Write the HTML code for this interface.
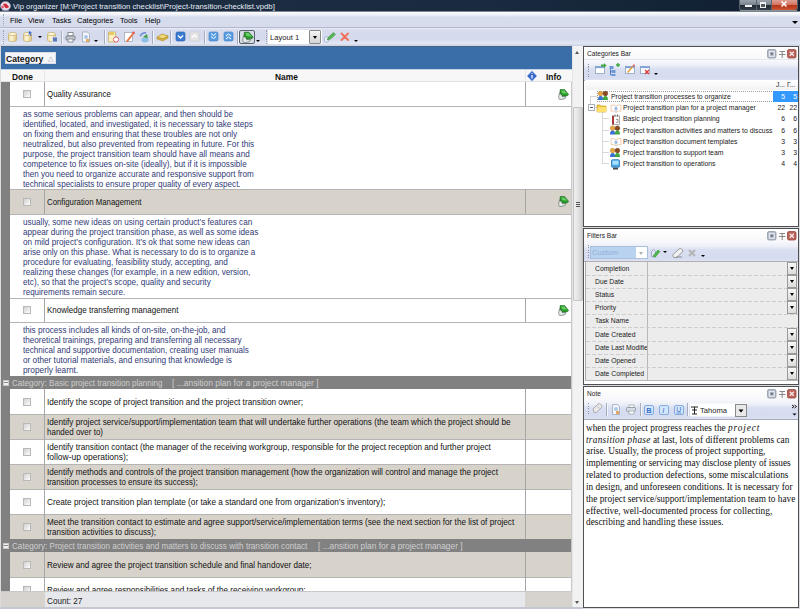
<!DOCTYPE html><html><head><meta charset="utf-8"><style>
*{margin:0;padding:0;box-sizing:border-box}
html,body{width:800px;height:609px;overflow:hidden;background:#f0f0f0;font-family:"Liberation Sans",sans-serif;font-size:8px;color:#000}
div,span{position:absolute;white-space:nowrap}
.t{font-size:8px;line-height:10px}
.cb{width:8px;height:8px;border:1px solid #b8b8b8;background:linear-gradient(135deg,#d0d0d0,#f0f0f0 70%,#fff)}
.vl{width:1px;background:#a6a6a6}
.hl{height:1px;background:#b4b4b4}
.desc{left:23px;color:#313a76;font-size:8.6px;line-height:9.96px;transform:scaleX(0.935);transform-origin:0 0}
.nm{left:47px;color:#111;font-size:8.6px;line-height:9.9px;transform:scaleX(0.95);transform-origin:0 0}
.grp{left:1px;width:571px;height:13px;background:#818181;color:#dadada;font-size:8px;line-height:13px}
.sep{width:1px;height:13px;background:#a8b0c4;border-right:1px solid #fff}
.ptitle{font-size:6.6px;color:#222}
.pbtn{width:9px;height:9px;border-radius:2px}
</style></head><body>
<div style="left:0;top:0;width:800px;height:11px;background:linear-gradient(90deg,#1e2f44,#1a2b40 60%,#0f1f30)"></div>
<div style="left:0;top:11px;width:800px;height:1px;background:#7a858f"></div>
<svg style="position:absolute;left:0px;top:0px" width="12" height="12" viewBox="0 0 12 12"><ellipse cx="5.5" cy="6" rx="5" ry="4.5" fill="#e8dce8" stroke="#a8a0b8" stroke-width=".6"/><path d="M3 4.5q2-2 4 0t2 2.5q-2 2-4 .5z" fill="#d02838"/><circle cx="2.6" cy="7" r="1.2" fill="#e05060"/><path d="M2 10q3.5 1.5 7 0" stroke="#8890b8" stroke-width="1" fill="none"/></svg>
<div style="left:13px;top:1.5px;font-size:7.7px;line-height:10px;color:#e4ecf4">Vip organizer [M:\Project transition checklist\Project-transition-checklist.vpdb]</div>
<div style="left:739px;top:0;width:59px;height:11px;border:1px solid #58606a;border-top:0;border-radius:0 0 3px 3px;background:linear-gradient(#9aa2ac,#7c858f 45%,#202a34 55%,#34404a)"></div>
<div style="left:756px;top:0;width:1px;height:10px;background:#5a626c"></div>
<div style="left:771px;top:0;width:1px;height:10px;background:#5a626c"></div>
<div style="left:772px;top:0;width:25px;height:10px;background:linear-gradient(#e0a092,#d27866 45%,#b83418 55%,#c85838);border-radius:0 0 3px 0"></div>
<div style="left:745px;top:5px;width:7px;height:2px;background:#f4f4f4"></div>
<div style="left:760px;top:2px;width:6px;height:6px;border:1px solid #f0f0f0;border-top-width:2px;background:#505860"></div>
<svg style="position:absolute;left:780px;top:0px" width="9" height="9" viewBox="0 0 9 9"><path d="M1.5 1.5l5 5M6.5 1.5l-5 5" stroke="#fff" stroke-width="1.6"/></svg>
<div style="left:740px;top:10px;width:57px;height:1px;background:#8a929a"></div>
<div style="left:0;top:12px;width:800px;height:15px;background:linear-gradient(#fdfdfe,#eceff8 3px,#d8ddee 5px,#d6dcec)"></div>
<div style="left:0;top:27px;width:800px;height:1px;background:#b4b8cc"></div>
<div style="left:10px;top:15.5px;font-size:7.5px;line-height:10px;color:#000">File</div>
<div style="left:28px;top:15.5px;font-size:7.5px;line-height:10px;color:#000">View</div>
<div style="left:52px;top:15.5px;font-size:7.5px;line-height:10px;color:#000">Tasks</div>
<div style="left:77px;top:15.5px;font-size:7.5px;line-height:10px;color:#000">Categories</div>
<div style="left:120px;top:15.5px;font-size:7.5px;line-height:10px;color:#000">Tools</div>
<div style="left:145px;top:15.5px;font-size:7.5px;line-height:10px;color:#000">Help</div>
<div style="left:3px;top:14px;width:1px;height:12px;border-left:1px dotted #9aa"></div>
<div style="left:792px;top:21px;width:0;height:0;border-left:3px solid transparent;border-right:3px solid transparent;border-top:3px solid #000"></div>
<div style="left:0;top:28px;width:800px;height:18px;background:linear-gradient(#eceef8,#d6dcee 2px,#d4daec 60%,#e2e6f4 85%,#c8d0e0)"></div>
<div style="left:3px;top:30px;width:1px;height:14px;border-left:1px dotted #9aa"></div>
<svg style="position:absolute;left:0px;top:28px" width="400" height="18" viewBox="0 0 400 18"><defs><linearGradient id="gy" x1="0" x2="1"><stop offset="0" stop-color="#eadc9c"/><stop offset=".4" stop-color="#fdf6d8"/><stop offset="1" stop-color="#d8c078"/></linearGradient></defs><path d="M8.5 6v6a4 1.6 0 0 0 8 0v-6" fill="url(#gy)" stroke="#c8b070" stroke-width=".8"/><ellipse cx="12.5" cy="6" rx="4" ry="1.6" fill="#fff8dc" stroke="#c8b070" stroke-width=".8"/><path d="M23.5 6v6a4 1.6 0 0 0 8 0v-6" fill="url(#gy)" stroke="#c8b070" stroke-width=".8"/><ellipse cx="27.5" cy="6" rx="4" ry="1.6" fill="#fff8dc" stroke="#c8b070" stroke-width=".8"/><path d="M29 3l3 1.5-1.5 0.8 1 2-1 .6-1-2-1 1z" fill="#3a6ad0"/><path d="M47.5 6v6a4 1.6 0 0 0 8 0v-6" fill="url(#gy)" stroke="#c8b070" stroke-width=".8"/><ellipse cx="51.5" cy="6" rx="4" ry="1.6" fill="#fff8dc" stroke="#c8b070" stroke-width=".8"/><rect x="52.5" y="9" width="5" height="5" fill="#5a78b8" stroke="#e8ecf4" stroke-width=".8"/><rect x="68" y="4.5" width="5" height="3.5" fill="#fff" stroke="#80868e" stroke-width=".9"/><rect x="66" y="8" width="9" height="4" rx="1" fill="#c8ccd4" stroke="#70767e" stroke-width=".9"/><rect x="68" y="11" width="5" height="3" fill="#fff" stroke="#80868e" stroke-width=".9"/><path d="M82.5 4h5l2 2v8h-7z" fill="#f4f6fa" stroke="#9aa6b8" stroke-width=".8"/><circle cx="86" cy="9" r="2" fill="#a8c8e8"/><rect x="86" y="11" width="3" height="3" fill="#e8a860"/><path d="M108.5 4h7v10h-7z" fill="#fbf0c0" stroke="#c8b070" stroke-width=".8"/><rect x="109" y="4" width="5" height="3" fill="#e8c860"/><circle cx="116" cy="11.5" r="2.6" fill="#fff" stroke="#e06070" stroke-width="1"/><rect x="124.5" y="4.5" width="8" height="9" fill="#fff" stroke="#a0a8b8" stroke-width=".8"/><path d="M126 13l6-7.5 1.5 1.2-6 7.5z" fill="#e8784a"/><circle cx="133.5" cy="5" r="1.4" fill="#e06050"/><path d="M140 8q3-4 6-3" stroke="#6a8ad8" stroke-width="1.4" fill="none"/><path d="M143 9l4-3 1 5z" fill="#40a040"/><ellipse cx="145" cy="12" rx="3.5" ry="2.5" fill="#8ac0e8"/><path d="M157 9l5-3 6 2-5 3z" fill="#f0d878" stroke="#b89838" stroke-width=".8"/><path d="M157 9v2l6 2 5-3v-2l-5 3z" fill="#d8b040" stroke="#b89838" stroke-width=".6"/><rect x="176" y="4" width="9" height="9" rx="1.5" fill="#3a7ad0" stroke="#2a5aa8" stroke-width=".6"/><path d="M178 7.5l2.5 2.5 2.5-2.5" stroke="#fff" stroke-width="1.3" fill="none"/><rect x="190" y="4" width="9" height="9" rx="1.5" fill="#e4e4e4" stroke="#c8c8c8" stroke-width=".6"/><path d="M192 9.5l2.5-2.5 2.5 2.5" stroke="#fff" stroke-width="1.3" fill="none"/><rect x="209" y="4" width="9" height="9" rx="1.5" fill="#5a9ee0" stroke="#3a78c0" stroke-width=".6"/><path d="M211 5.5l2.5 2 2.5-2M211 8.5l2.5 2 2.5-2" stroke="#fff" stroke-width="1" fill="none"/><rect x="224" y="4" width="9" height="9" rx="1.5" fill="#5a9ee0" stroke="#3a78c0" stroke-width=".6"/><path d="M226 8l2.5-2 2.5 2M226 11l2.5-2 2.5 2" stroke="#fff" stroke-width="1" fill="none"/><rect x="239.5" y="2.5" width="15" height="13" rx="1.5" fill="#d6dbe4" stroke="#5a6470" stroke-width="1"/><g transform="translate(242,3.6) scale(1.05)"><path d="M.6 8.5L1.5 3.8 3.6 3.4 4.6 7.6H8L7 9.6 3 10.5H1.6z" fill="#e2e8ec" stroke="#6a786a" stroke-width=".7"/><path d="M2.2 .6H6.6L10.6 5.4 9.6 6.6 8 6.9 4.2 7.1 3.4 4.6 2 5.2z" fill="#28a028" stroke="#1a601a" stroke-width=".6"/><path d="M3.3 1.4h3l2.8 3.2-4.8-.4z" fill="#6acc6a"/></g><rect x="324.5" y="9" width="4" height="5" rx="1" fill="#f0f4fa" stroke="#98a4c8" stroke-width=".7"/><path d="M327 12l1.5-3 5-4.5 2 2-5 4.5z" fill="#58b858" stroke="#308030" stroke-width=".5"/><path d="M341.5 5.5l6.5 6.5M348 5.5l-6.5 6.5" stroke="#f0705a" stroke-width="1.9" stroke-linecap="round"/></svg>
<div style="left:38px;top:36px;width:0;height:0;border-left:2px solid transparent;border-right:2px solid transparent;border-top:2px solid #000"></div>
<div style="left:61px;top:31px;width:1px;height:13px;background:#a4acc0;box-shadow:1px 0 0 #f4f6fb"></div>
<div style="left:94px;top:40px;width:0;height:0;border-left:2px solid transparent;border-right:2px solid transparent;border-top:2px solid #000"></div>
<div style="left:104px;top:30px;width:1px;height:14px;background:#a4acc0;box-shadow:1px 0 0 #f4f6fb"></div>
<div style="left:152px;top:31px;width:1px;height:13px;background:#a4acc0;box-shadow:1px 0 0 #f4f6fb"></div>
<div style="left:170px;top:31px;width:1px;height:13px;background:#a4acc0;box-shadow:1px 0 0 #f4f6fb"></div>
<div style="left:204px;top:31px;width:1px;height:13px;background:#a4acc0;box-shadow:1px 0 0 #f4f6fb"></div>
<div style="left:237px;top:31px;width:1px;height:13px;background:#a4acc0;box-shadow:1px 0 0 #f4f6fb"></div>
<div style="left:256px;top:40px;width:0;height:0;border-left:2px solid transparent;border-right:2px solid transparent;border-top:2px solid #000"></div>
<div style="left:266px;top:30px;width:1px;height:14px;border-left:1px dotted #98a0b0"></div>
<div style="left:268px;top:30px;width:54px;height:14px;background:#fff"></div>
<div style="left:270px;top:32.5px;font-size:7.6px;line-height:10px;color:#222">Layout 1</div>
<div style="left:309px;top:30px;width:12px;height:14px;background:linear-gradient(#f4f4f4,#d4d4d4);border:1px solid #8a8a8a;border-radius:1px"></div>
<div style="left:313px;top:36px;width:0;height:0;border-left:2.5px solid transparent;border-right:2.5px solid transparent;border-top:3px solid #000"></div>
<div style="left:354px;top:40px;width:0;height:0;border-left:2px solid transparent;border-right:2px solid transparent;border-top:2px solid #000"></div>
<div style="left:0;top:46px;width:1px;height:563px;background:#dcdcdc"></div>
<div style="left:1px;top:46px;width:571px;height:563px;background:#fff"></div>
<div style="left:1px;top:46px;width:571px;height:1px;background:#4a6284"></div><div style="left:1px;top:47px;width:571px;height:22px;background:#3a6ea8"></div>
<div style="left:5px;top:52px;width:51px;height:12px;background:#f4f6fa;border:1px solid #d8dde8"></div>
<div style="left:6px;top:54px;font-size:8.6px;line-height:10px;font-weight:bold;color:#111">Category</div>
<div style="left:48px;top:54px;font-size:7px;line-height:10px;color:#999">&#x25b3;</div>
<div style="left:1px;top:69px;width:571px;height:13px;background:#f7f7f7"></div>
<div style="left:1px;top:69px;width:571px;height:1px;background:#c4d4e6"></div>
<div style="left:1px;top:81px;width:571px;height:1px;background:#e2e2e2"></div>
<div style="left:12px;top:72px;font-size:8.4px;line-height:10px;font-weight:bold;color:#111">Done</div>
<div style="left:44px;top:70px;width:1px;height:11px;background:#e6e6e6"></div>
<div style="left:275px;top:72px;font-size:8.4px;line-height:10px;font-weight:bold;color:#111">Name</div>
<div style="left:525px;top:70px;width:1px;height:11px;background:#e6e6e6"></div>
<svg style="position:absolute;left:526px;top:70px" width="12" height="12" viewBox="0 0 12 12"><path d="M6 .8L11 6 6 11.2 1 6z" fill="#3a68c8" stroke="#a8bce8" stroke-width=".9"/><path d="M6 3.2v.8M6 5v3.5" stroke="#fff" stroke-width="1.2"/></svg>
<div style="left:546px;top:72px;font-size:8.4px;line-height:10px;font-weight:bold;color:#111">Info</div>
<div style="left:10px;top:82px;width:562px;height:24px;background:#fff"></div>
<div style="left:1px;top:82px;width:9px;height:24px;background:#808080"></div>
<div class="vl" style="left:44px;top:82px;height:24px"></div>
<div class="vl" style="left:525px;top:82px;height:24px"></div>
<div class="cb" style="left:23px;top:90px"></div>
<div class="nm" style="top:90.20px;transform:scaleX(0.9208)">Quality Assurance</div>
<svg style="position:absolute;left:558px;top:88.5px" width="11" height="11" viewBox="0 0 11 11"><path d="M.6 8.5L1.5 3.8 3.6 3.4 4.6 7.6H8L7 9.6 3 10.5H1.6z" fill="#e2e8ec" stroke="#6a786a" stroke-width=".7"/><path d="M2.2 .6H6.6L10.6 5.4 9.6 6.6 8 6.9 4.2 7.1 3.4 4.6 2 5.2z" fill="#28a028" stroke="#1a601a" stroke-width=".6"/><path d="M3.3 1.4h3l2.8 3.2-4.8-.4z" fill="#6acc6a"/></svg>
<div style="left:10px;top:106px;width:562px;height:83px;background:#fff"></div>
<div style="left:1px;top:106px;width:9px;height:83px;background:#808080"></div>
<div class="hl" style="left:10px;top:106px;width:562px"></div>
<div class="desc" style="top:110.30px;transform:scaleX(0.9413)">as some serious problems can appear, and then should be</div>
<div class="desc" style="top:120.26px;transform:scaleX(0.9391)">identified, located, and investigated, it is necessary to take steps</div>
<div class="desc" style="top:130.22px;transform:scaleX(0.9479)">on fixing them and ensuring that these troubles are not only</div>
<div class="desc" style="top:140.18px;transform:scaleX(0.9545)">neutralized, but also prevented from repeating in future. For this</div>
<div class="desc" style="top:150.14px;transform:scaleX(0.9472)">purpose, the project transition team should have all means and</div>
<div class="desc" style="top:160.10px;transform:scaleX(0.9460)">competence to fix issues on-site (ideally), but if it is impossible</div>
<div class="desc" style="top:170.06px;transform:scaleX(0.9379)">then you need to organize accurate and responsive support from</div>
<div class="desc" style="top:180.02px;transform:scaleX(0.9393)">technical specialists to ensure proper quality of every aspect.</div>
<div style="left:10px;top:189px;width:562px;height:25px;background:#d7d3cb"></div>
<div style="left:1px;top:189px;width:9px;height:25px;background:#808080"></div>
<div class="hl" style="left:10px;top:189px;width:562px"></div>
<div class="vl" style="left:44px;top:189px;height:25px"></div>
<div class="vl" style="left:525px;top:189px;height:25px"></div>
<div class="cb" style="left:23px;top:198px"></div>
<div class="nm" style="top:197.70px;transform:scaleX(0.9107)">Configuration Management</div>
<svg style="position:absolute;left:558px;top:196px" width="11" height="11" viewBox="0 0 11 11"><path d="M.6 8.5L1.5 3.8 3.6 3.4 4.6 7.6H8L7 9.6 3 10.5H1.6z" fill="#e2e8ec" stroke="#6a786a" stroke-width=".7"/><path d="M2.2 .6H6.6L10.6 5.4 9.6 6.6 8 6.9 4.2 7.1 3.4 4.6 2 5.2z" fill="#28a028" stroke="#1a601a" stroke-width=".6"/><path d="M3.3 1.4h3l2.8 3.2-4.8-.4z" fill="#6acc6a"/></svg>
<div style="left:10px;top:214px;width:562px;height:84px;background:#fff"></div>
<div style="left:1px;top:214px;width:9px;height:84px;background:#808080"></div>
<div class="hl" style="left:10px;top:214px;width:562px"></div>
<div class="desc" style="top:218.30px;transform:scaleX(0.9437)">usually, some new ideas on using certain product&#8217;s features can</div>
<div class="desc" style="top:228.26px;transform:scaleX(0.9508)">appear during the project transition phase, as well as some ideas</div>
<div class="desc" style="top:238.22px;transform:scaleX(0.9532)">on mild project&#8217;s configuration. It&#8217;s ok that some new ideas can</div>
<div class="desc" style="top:248.18px;transform:scaleX(0.9382)">arise only on this phase. What is necessary to do is to organize a</div>
<div class="desc" style="top:258.14px;transform:scaleX(0.9490)">procedure for evaluating, feasibility study, accepting, and</div>
<div class="desc" style="top:268.10px;transform:scaleX(0.9476)">realizing these changes (for example, in a new edition, version,</div>
<div class="desc" style="top:278.06px;transform:scaleX(0.9523)">etc), so that the project&#8217;s scope, quality and security</div>
<div class="desc" style="top:288.02px;transform:scaleX(0.9341)">requirements remain secure.</div>
<div style="left:10px;top:298px;width:562px;height:24px;background:#fff"></div>
<div style="left:1px;top:298px;width:9px;height:24px;background:#808080"></div>
<div class="hl" style="left:10px;top:298px;width:562px"></div>
<div class="vl" style="left:44px;top:298px;height:24px"></div>
<div class="vl" style="left:525px;top:298px;height:24px"></div>
<div class="cb" style="left:23px;top:306px"></div>
<div class="nm" style="top:306.20px;transform:scaleX(0.9330)">Knowledge transferring management</div>
<svg style="position:absolute;left:558px;top:304.5px" width="11" height="11" viewBox="0 0 11 11"><path d="M.6 8.5L1.5 3.8 3.6 3.4 4.6 7.6H8L7 9.6 3 10.5H1.6z" fill="#e2e8ec" stroke="#6a786a" stroke-width=".7"/><path d="M2.2 .6H6.6L10.6 5.4 9.6 6.6 8 6.9 4.2 7.1 3.4 4.6 2 5.2z" fill="#28a028" stroke="#1a601a" stroke-width=".6"/><path d="M3.3 1.4h3l2.8 3.2-4.8-.4z" fill="#6acc6a"/></svg>
<div style="left:10px;top:322px;width:562px;height:54px;background:#fff"></div>
<div style="left:1px;top:322px;width:9px;height:54px;background:#808080"></div>
<div class="hl" style="left:10px;top:322px;width:562px"></div>
<div class="desc" style="top:326.30px;transform:scaleX(0.9491)">this process includes all kinds of on-site, on-the-job, and</div>
<div class="desc" style="top:336.26px;transform:scaleX(0.9469)">theoretical trainings, preparing and transferring all necessary</div>
<div class="desc" style="top:346.22px;transform:scaleX(0.9381)">technical and supportive documentation, creating user manuals</div>
<div class="desc" style="top:356.18px;transform:scaleX(0.9568)">or other tutorial materials, and ensuring that knowledge is</div>
<div class="desc" style="top:366.14px;transform:scaleX(0.9617)">properly learnt.</div>
<div class="grp" style="top:376px"></div>
<div style="left:3px;top:380px;width:6px;height:6px;background:#f0f0f0;border:1px solid #c8c8c8"></div>
<div style="left:4px;top:382px;width:4px;height:1px;background:#8a8a8a"></div>
<div style="left:12px;top:378px;font-size:8.6px;line-height:10px;color:#cfcfcf;transform:scaleX(0.9346);transform-origin:0 0">Category: Basic project transition planning</div>
<div style="left:172px;top:378px;font-size:8.6px;line-height:10px;color:#cfcfcf;transform:scaleX(0.9832);transform-origin:0 0">[ ...ansition plan for a project manager ]</div>
<div style="left:10px;top:389px;width:562px;height:25px;background:#fff"></div>
<div style="left:1px;top:389px;width:9px;height:25px;background:#808080"></div>
<div class="vl" style="left:44px;top:389px;height:25px"></div>
<div class="vl" style="left:525px;top:389px;height:25px"></div>
<div class="cb" style="left:23px;top:398px"></div>
<div class="nm" style="top:397.70px;transform:scaleX(0.9590)">Identify the scope of project transition and the project transition owner;</div>
<div style="left:10px;top:414px;width:562px;height:25px;background:#d7d3cb"></div>
<div style="left:1px;top:414px;width:9px;height:25px;background:#808080"></div>
<div class="hl" style="left:10px;top:414px;width:562px"></div>
<div class="vl" style="left:44px;top:414px;height:25px"></div>
<div class="vl" style="left:525px;top:414px;height:25px"></div>
<div class="cb" style="left:23px;top:423px"></div>
<div class="nm" style="top:417.80px;transform:scaleX(0.9552)">Identify project service/support/implementation team that will undertake further operations (the team which the project should be</div>
<div class="nm" style="top:427.70px;transform:scaleX(0.9300)">handed over to)</div>
<div style="left:10px;top:439px;width:562px;height:25px;background:#fff"></div>
<div style="left:1px;top:439px;width:9px;height:25px;background:#808080"></div>
<div class="hl" style="left:10px;top:439px;width:562px"></div>
<div class="vl" style="left:44px;top:439px;height:25px"></div>
<div class="vl" style="left:525px;top:439px;height:25px"></div>
<div class="cb" style="left:23px;top:448px"></div>
<div class="nm" style="top:442.80px;transform:scaleX(0.9539)">Identify transition contact (the manager of the receiving workgroup, responsible for the project reception and further project</div>
<div class="nm" style="top:452.70px;transform:scaleX(0.9880)">follow-up operations);</div>
<div style="left:10px;top:464px;width:562px;height:25px;background:#d7d3cb"></div>
<div style="left:1px;top:464px;width:9px;height:25px;background:#808080"></div>
<div class="hl" style="left:10px;top:464px;width:562px"></div>
<div class="vl" style="left:44px;top:464px;height:25px"></div>
<div class="vl" style="left:525px;top:464px;height:25px"></div>
<div class="cb" style="left:23px;top:473px"></div>
<div class="nm" style="top:467.80px;transform:scaleX(0.9515)">Identify methods and controls of the project transition management (how the organization will control and manage the project</div>
<div class="nm" style="top:477.70px;transform:scaleX(0.9171)">transition processes to ensure its success);</div>
<div style="left:10px;top:489px;width:562px;height:25px;background:#fff"></div>
<div style="left:1px;top:489px;width:9px;height:25px;background:#808080"></div>
<div class="hl" style="left:10px;top:489px;width:562px"></div>
<div class="vl" style="left:44px;top:489px;height:25px"></div>
<div class="vl" style="left:525px;top:489px;height:25px"></div>
<div class="cb" style="left:23px;top:498px"></div>
<div class="nm" style="top:497.70px;transform:scaleX(0.9560)">Create project transition plan template (or take a standard one from organization&#8217;s inventory);</div>
<div style="left:10px;top:514px;width:562px;height:25px;background:#d7d3cb"></div>
<div style="left:1px;top:514px;width:9px;height:25px;background:#808080"></div>
<div class="hl" style="left:10px;top:514px;width:562px"></div>
<div class="vl" style="left:44px;top:514px;height:25px"></div>
<div class="vl" style="left:525px;top:514px;height:25px"></div>
<div class="cb" style="left:23px;top:523px"></div>
<div class="nm" style="top:517.80px;transform:scaleX(0.9524)">Meet the transition contact to estimate and agree support/service/implementation terms (see the next section for the list of project</div>
<div class="nm" style="top:527.70px;transform:scaleX(0.9396)">transition activities to discuss);</div>
<div class="grp" style="top:539px"></div>
<div style="left:3px;top:543px;width:6px;height:6px;background:#f0f0f0;border:1px solid #c8c8c8"></div>
<div style="left:4px;top:545px;width:4px;height:1px;background:#8a8a8a"></div>
<div style="left:12px;top:541px;font-size:8.6px;line-height:10px;color:#cfcfcf;transform:scaleX(0.9453);transform-origin:0 0">Category: Project transition activities and matters to discuss with transition contact</div>
<div style="left:318px;top:541px;font-size:8.6px;line-height:10px;color:#cfcfcf;transform:scaleX(0.9698);transform-origin:0 0">[ ...ansition plan for a project manager ]</div>
<div style="left:10px;top:552px;width:562px;height:25px;background:#d7d3cb"></div>
<div style="left:1px;top:552px;width:9px;height:25px;background:#808080"></div>
<div class="vl" style="left:44px;top:552px;height:25px"></div>
<div class="vl" style="left:525px;top:552px;height:25px"></div>
<div class="cb" style="left:23px;top:561px"></div>
<div class="nm" style="top:560.70px;transform:scaleX(0.9429)">Review and agree the project transition schedule and final handover date;</div>
<div style="left:10px;top:577px;width:562px;height:25px;background:#fff"></div>
<div style="left:1px;top:577px;width:9px;height:25px;background:#808080"></div>
<div class="hl" style="left:10px;top:577px;width:562px"></div>
<div class="vl" style="left:44px;top:577px;height:25px"></div>
<div class="vl" style="left:525px;top:577px;height:25px"></div>
<div class="cb" style="left:23px;top:586px"></div>
<div class="nm" style="top:585.70px;transform:scaleX(0.9478)">Review and agree responsibilities and tasks of the receiving workgroup;</div>
<div style="left:571px;top:82px;width:1px;height:509px;background:#c8c8c8"></div>
<div style="left:1px;top:591px;width:571px;height:16px;background:#e6e8ec;border-top:1px solid #c8c8c8"></div>
<div style="left:1px;top:592px;width:44px;height:15px;background:#d6d3ce"></div>
<div style="left:525px;top:592px;width:47px;height:15px;background:#d6d3ce"></div>
<div style="left:47px;top:595.5px;font-size:8.6px;line-height:10px;color:#222;transform:scaleX(.95);transform-origin:0 0">Count: 27</div>
<div style="left:0;top:607px;width:583px;height:2px;background:#c4c8d0"></div>
<div style="left:0;top:607px;width:800px;height:2px;background:#c4c8d0"></div>
<div style="left:572px;top:46px;width:11px;height:561px;background:#f2f2f2;border-left:1px solid #e6e6e6"></div>
<div style="left:575px;top:51px;width:0;height:0;border-left:2.5px solid transparent;border-right:2.5px solid transparent;border-bottom:3px solid #555"></div>
<div style="left:573px;top:107px;width:10px;height:194px;background:linear-gradient(90deg,#f0f0f0,#e0e0e0 60%,#cfcfcf);border:1px solid #c4c4c4;border-radius:1px"></div>
<div style="left:576px;top:202px;width:4px;height:5px;background:repeating-linear-gradient(#555 0 1px,transparent 1px 2px)"></div>
<div style="left:575px;top:601px;width:0;height:0;border-left:2.5px solid transparent;border-right:2.5px solid transparent;border-top:3px solid #555"></div>
<div style="left:583px;top:46px;width:217px;height:563px;background:#d8dbe2"></div>
<div style="left:583px;top:46px;width:216px;height:181px;border:1px solid #505050;background:#fff"></div>
<div style="left:584px;top:47px;width:214px;height:13px;background:linear-gradient(#fff,#f8f8fa);border-bottom:1px solid #e4e6ec"></div>
<div class="ptitle" style="left:587px;top:49px;line-height:10px">Categories Bar</div>
<svg style="position:absolute;left:766px;top:48px" width="32" height="12" viewBox="0 0 32 12"><rect x="1.5" y="1.5" width="8.5" height="8.5" rx="1.5" fill="#aab4c2" stroke="#909aa8" stroke-width=".8"/><rect x="3.3" y="3.3" width="5" height="5" fill="none" stroke="#eef0f4" stroke-width="1"/><rect x="5" y="5" width="1.6" height="1.6" fill="#556"/><path d="M13.5 3.5h5.5M16.2 3.5v2.5M13 6.5h6.5M16.2 6.5v3.5" stroke="#7a7a7a" stroke-width=".9" fill="none"/><rect x="21.5" y="1.5" width="8.5" height="8.5" rx="1.5" fill="#b8645a" stroke="#98483e" stroke-width=".8"/><path d="M23.8 3.8l4 4M27.8 3.8l-4 4" stroke="#f8e8e8" stroke-width="1.3"/></svg>
<div style="left:584px;top:60px;width:214px;height:21px;background:linear-gradient(#f8f9fd,#eef0f8 25%,#d9dff1 45%,#d6dcf0 85%,#dde2f2);border-bottom:1px solid #a8acb8"></div>
<div style="left:588px;top:64px;width:1px;height:13px;background:repeating-linear-gradient(#8890a0 0 1px,transparent 1px 2.5px)"></div>
<svg style="position:absolute;left:584px;top:60px" width="90" height="20" viewBox="0 0 90 20"><rect x="11.5" y="6.5" width="9" height="7" fill="#fff" stroke="#8aa0c0" stroke-width=".8"/><rect x="11.5" y="6.5" width="9" height="1.6" fill="#7aa0d8"/><path d="M17 4.5h3v-1.5l2.5 2.5-2.5 2.5v-1.5h-3z" fill="#40a840"/><rect x="25.5" y="6" width="4" height="3" fill="#6a98d8"/><rect x="27.5" y="10" width="4" height="3" fill="#6a98d8"/><rect x="27.5" y="14" width="4" height="2" fill="#6a98d8"/><path d="M26.5 9v6h1M26.5 11.5h1" stroke="#3a68b0" stroke-width=".8" fill="none"/><path d="M32 5h4M34 3v4" stroke="#40a840" stroke-width="1.4"/><rect x="41.5" y="6.5" width="9" height="7" fill="#fff" stroke="#8aa0c0" stroke-width=".8"/><rect x="41.5" y="6.5" width="9" height="1.6" fill="#7aa0d8"/><path d="M43 12l5-6 1.2 1-5 6z" fill="#e0a040"/><path d="M48.5 5.5l1.5-1.2 1 1-1.2 1.5z" fill="#e05040"/><rect x="56.5" y="6.5" width="9" height="7" fill="#fff" stroke="#8aa0c0" stroke-width=".8"/><rect x="56.5" y="6.5" width="9" height="1.6" fill="#7aa0d8"/><path d="M61 10l4 4M65 10l-4 4" stroke="#e03030" stroke-width="1.2"/></svg>
<div style="left:654px;top:73px;width:0;height:0;border-left:2px solid transparent;border-right:2px solid transparent;border-top:2px solid #000"></div>
<div style="left:585px;top:80px;width:213px;height:10px;background:linear-gradient(#fff,#f2f2f2)"></div>
<div style="left:776px;top:80px;font-size:6.6px;line-height:10px;color:#222">J...</div>
<div style="left:787px;top:80px;font-size:6.6px;line-height:10px;color:#222">&#x413;...</div>
<div style="left:597px;top:91px;width:201px;height:11px;border:1px dotted #9a9a9a"></div>
<div style="left:773px;top:91px;width:25px;height:11px;background:#3399ff"></div>
<div style="left:590px;top:96px;width:1px;height:8px;background:#d4d4d4"></div>
<div style="left:590px;top:96px;width:7px;height:1px;background:#d4d4d4"></div>
<div style="left:602px;top:112px;width:1px;height:52px;background:#d8d8d8"></div>
<div style="left:603px;top:118px;width:6px;height:1px;background:#d8d8d8"></div>
<div style="left:603px;top:130px;width:6px;height:1px;background:#d8d8d8"></div>
<div style="left:603px;top:141px;width:6px;height:1px;background:#d8d8d8"></div>
<div style="left:603px;top:152px;width:6px;height:1px;background:#d8d8d8"></div>
<div style="left:603px;top:163px;width:6px;height:1px;background:#d8d8d8"></div>
<div style="left:593px;top:107px;width:4px;height:1px;background:#d4d4d4"></div>
<div style="left:588px;top:104px;width:7px;height:7px;border:1px solid #a8b0bc;background:#fff"></div>
<div style="left:590px;top:107px;width:3px;height:1px;background:#606060"></div>
<svg style="position:absolute;left:0;top:0" width="800" height="200"><circle cx="600.6" cy="93.6" r="2.3" fill="#e8a848" stroke="#b87818" stroke-width=".5"/><path d="M598 100q0-4 2.6-4t2.6 4z" fill="#3a70d0"/><circle cx="605.4" cy="93.6" r="2.3" fill="#8a4a20" stroke="#5a2a10" stroke-width=".5"/><path d="M602.8 100q0-4 2.6-4t2.6 4z" fill="#40a840"/><path d="M597 105h3l1 1h5v6h-9z" fill="#f0c838" stroke="#c09820" stroke-width=".6"/><path d="M598 107h9l-1 5h-9z" fill="#ffe070"/><path d="M611 105.2q2.5-1 5 1q2.5-2 5-1v6q-2.5-1-5 1q-2.5-2-5-1z" fill="#fff" stroke="#e8c0a0" stroke-width=".8"/><path d="M616 106.2v6" stroke="#b8c8e0" stroke-width=".8"/><circle cx="616" cy="108.7" r="1.6" fill="#9ab8e0"/><rect x="612.5" y="115.9" width="7" height="8.5" fill="#fff" stroke="#888" stroke-width=".7"/><rect x="612" y="115.9" width="2" height="8.5" fill="#a83838"/><path d="M615 114.4v2.5M617.5 114.4v2.5" stroke="#666" stroke-width=".8"/><path d="M616 119.4h2v3h-2" stroke="#555" stroke-width=".6" fill="none"/><circle cx="612.6" cy="128.2" r="2.3" fill="#e8a848" stroke="#b87818" stroke-width=".5"/><path d="M610 134.6q0-4 2.6-4t2.6 4z" fill="#3a70d0"/><circle cx="617.4" cy="128.2" r="2.3" fill="#8a4a20" stroke="#5a2a10" stroke-width=".5"/><path d="M614.8 134.6q0-4 2.6-4t2.6 4z" fill="#40a840"/><path d="M611 138.8q2.5-1 5 1q2.5-2 5-1v6q-2.5-1-5 1q-2.5-2-5-1z" fill="#fff" stroke="#e8c0a0" stroke-width=".8"/><path d="M616 139.8v6" stroke="#b8c8e0" stroke-width=".8"/><circle cx="616" cy="142.3" r="1.6" fill="#9ab8e0"/><circle cx="612.6" cy="150.6" r="2.3" fill="#e8a848" stroke="#b87818" stroke-width=".5"/><path d="M610 157q0-4 2.6-4t2.6 4z" fill="#3a70d0"/><circle cx="617.4" cy="150.6" r="2.3" fill="#8a4a20" stroke="#5a2a10" stroke-width=".5"/><path d="M614.8 157q0-4 2.6-4t2.6 4z" fill="#40a840"/><rect x="611.5" y="159.7" width="8" height="7.5" rx="1" fill="#48a8e8" stroke="#2a70b0" stroke-width=".8"/><rect x="612.5" y="160.7" width="6" height="4" fill="#a8e0ff"/><rect x="613" y="167.7" width="5" height="1.8" fill="#404850"/></svg>
<div style="left:611px;top:91px;font-size:6.85px;line-height:11px;color:#1a1a1a">Project transition processes to organize</div>
<div style="left:760px;top:91px;width:25px;text-align:right;font-size:6.85px;line-height:11px;color:#fff">5</div>
<div style="left:772px;top:91px;width:25px;text-align:right;font-size:6.85px;line-height:11px;color:#fff">5</div>
<div style="left:623px;top:102.2px;font-size:6.85px;line-height:11px;color:#1a1a1a">Project transition plan for a project manager</div>
<div style="left:760px;top:102.2px;width:25px;text-align:right;font-size:6.85px;line-height:11px;color:#222">22</div>
<div style="left:772px;top:102.2px;width:25px;text-align:right;font-size:6.85px;line-height:11px;color:#222">22</div>
<div style="left:623px;top:113.4px;font-size:6.85px;line-height:11px;color:#1a1a1a">Basic project transition planning</div>
<div style="left:760px;top:113.4px;width:25px;text-align:right;font-size:6.85px;line-height:11px;color:#222">6</div>
<div style="left:772px;top:113.4px;width:25px;text-align:right;font-size:6.85px;line-height:11px;color:#222">6</div>
<div style="left:623px;top:124.6px;font-size:6.85px;line-height:11px;color:#1a1a1a">Project transition activities and matters to discuss</div>
<div style="left:760px;top:124.6px;width:25px;text-align:right;font-size:6.85px;line-height:11px;color:#222">6</div>
<div style="left:772px;top:124.6px;width:25px;text-align:right;font-size:6.85px;line-height:11px;color:#222">6</div>
<div style="left:623px;top:135.8px;font-size:6.85px;line-height:11px;color:#1a1a1a">Project transition document templates</div>
<div style="left:760px;top:135.8px;width:25px;text-align:right;font-size:6.85px;line-height:11px;color:#222">3</div>
<div style="left:772px;top:135.8px;width:25px;text-align:right;font-size:6.85px;line-height:11px;color:#222">3</div>
<div style="left:623px;top:147px;font-size:6.85px;line-height:11px;color:#1a1a1a">Project transition to support team</div>
<div style="left:760px;top:147px;width:25px;text-align:right;font-size:6.85px;line-height:11px;color:#222">3</div>
<div style="left:772px;top:147px;width:25px;text-align:right;font-size:6.85px;line-height:11px;color:#222">3</div>
<div style="left:623px;top:158.2px;font-size:6.85px;line-height:11px;color:#1a1a1a">Project transition to operations</div>
<div style="left:760px;top:158.2px;width:25px;text-align:right;font-size:6.85px;line-height:11px;color:#222">4</div>
<div style="left:772px;top:158.2px;width:25px;text-align:right;font-size:6.85px;line-height:11px;color:#222">4</div>
<div style="left:583px;top:228px;width:216px;height:157px;border:1px solid #505050;background:#fff"></div>
<div style="left:584px;top:229px;width:214px;height:13px;background:linear-gradient(#fff,#f8f8fa);border-bottom:1px solid #e4e6ec"></div>
<div class="ptitle" style="left:587px;top:231px;line-height:10px">Filters Bar</div>
<svg style="position:absolute;left:766px;top:230px" width="32" height="12" viewBox="0 0 32 12"><rect x="1.5" y="1.5" width="8.5" height="8.5" rx="1.5" fill="#aab4c2" stroke="#909aa8" stroke-width=".8"/><rect x="3.3" y="3.3" width="5" height="5" fill="none" stroke="#eef0f4" stroke-width="1"/><rect x="5" y="5" width="1.6" height="1.6" fill="#556"/><path d="M13.5 3.5h5.5M16.2 3.5v2.5M13 6.5h6.5M16.2 6.5v3.5" stroke="#7a7a7a" stroke-width=".9" fill="none"/><rect x="21.5" y="1.5" width="8.5" height="8.5" rx="1.5" fill="#b8645a" stroke="#98483e" stroke-width=".8"/><path d="M23.8 3.8l4 4M27.8 3.8l-4 4" stroke="#f8e8e8" stroke-width="1.3"/></svg>
<div style="left:584px;top:241px;width:214px;height:21px;background:linear-gradient(#f8f9fd,#eef0f8 25%,#d9dff1 45%,#d6dcf0 85%,#dde2f2);border-bottom:1px solid #a8acb8"></div>
<div style="left:588px;top:245px;width:1px;height:13px;background:repeating-linear-gradient(#8890a0 0 1px,transparent 1px 2.5px)"></div>
<div style="left:590px;top:246px;width:58px;height:13px;background:#b8d2f0;border:1px solid #a8c0e0"></div>
<div style="left:592px;top:247.5px;font-size:7.6px;line-height:10px;color:#90b0d8">Custom</div>
<div style="left:636px;top:247px;width:11px;height:11px;background:#fff"></div>
<div style="left:639px;top:252px;width:0;height:0;border-left:2.5px solid transparent;border-right:2.5px solid transparent;border-top:3px solid #b0b0b0"></div>
<svg style="position:absolute;left:645px;top:244px" width="65" height="17" viewBox="0 0 65 17"><path d="M6.5 12.5v-5l2-2 2 2v5z" fill="#e0e4f0" stroke="#8890c0" stroke-width=".7"/><path d="M8 12l5-6 2 1.5-5 6z" fill="#50b850" stroke="#309030" stroke-width=".5"/><path d="M28 10.5l6-5.5q1.5-1 2.5 0l.8.8q1 1 0 2.2l-5.5 5.5h-3q-1.5-1.5-.8-3z" fill="#f0f0f0" stroke="#888" stroke-width=".8"/><path d="M31 13h6" stroke="#777" stroke-width=".8"/><path d="M44 6l6 6M50 6l-6 6" stroke="#b4b4b4" stroke-width="2"/></svg>
<div style="left:663px;top:251px;width:0;height:0;border-left:2px solid transparent;border-right:2px solid transparent;border-top:2px solid #000"></div>
<div style="left:701px;top:255px;width:0;height:0;border-left:2px solid transparent;border-right:2px solid transparent;border-top:2px solid #000"></div>
<div style="left:585px;top:261px;width:213px;height:119px;background:#ececec"></div>
<div style="left:585px;top:261px;width:213px;height:1px;background:#b0b0b0"></div>
<div style="left:585px;top:261px;width:1px;height:120px;background:#a8a8a8"></div>
<div style="left:585px;top:380px;width:213px;height:1px;background:#b8b8b8"></div>
<div style="left:647px;top:262px;width:1px;height:118px;background:#b8b8b8"></div>
<div style="left:595px;top:263px;width:52px;overflow:hidden;font-size:6.8px;line-height:11px;color:#1a1a1a">Completion</div>
<div style="left:586px;top:275px;width:212px;height:1px;background:repeating-linear-gradient(90deg,#cdcdcd 0 4px,transparent 4px 6px)"></div>
<div style="left:787px;top:262px;width:10px;height:13px;background:linear-gradient(#f8f8f8,#dcdcdc);border:1px solid #9a9a9a"></div>
<div style="left:790px;top:267px;width:0;height:0;border-left:2px solid transparent;border-right:2px solid transparent;border-top:3px solid #000"></div>
<div style="left:595px;top:276px;width:52px;overflow:hidden;font-size:6.8px;line-height:11px;color:#1a1a1a">Due Date</div>
<div style="left:586px;top:288px;width:212px;height:1px;background:repeating-linear-gradient(90deg,#cdcdcd 0 4px,transparent 4px 6px)"></div>
<div style="left:787px;top:275px;width:10px;height:13px;background:linear-gradient(#f8f8f8,#dcdcdc);border:1px solid #9a9a9a"></div>
<div style="left:790px;top:280px;width:0;height:0;border-left:2px solid transparent;border-right:2px solid transparent;border-top:3px solid #000"></div>
<div style="left:595px;top:289px;width:52px;overflow:hidden;font-size:6.8px;line-height:11px;color:#1a1a1a">Status</div>
<div style="left:586px;top:301px;width:212px;height:1px;background:repeating-linear-gradient(90deg,#cdcdcd 0 4px,transparent 4px 6px)"></div>
<div style="left:787px;top:288px;width:10px;height:13px;background:linear-gradient(#f8f8f8,#dcdcdc);border:1px solid #9a9a9a"></div>
<div style="left:790px;top:293px;width:0;height:0;border-left:2px solid transparent;border-right:2px solid transparent;border-top:3px solid #000"></div>
<div style="left:595px;top:302px;width:52px;overflow:hidden;font-size:6.8px;line-height:11px;color:#1a1a1a">Priority</div>
<div style="left:586px;top:314px;width:212px;height:1px;background:repeating-linear-gradient(90deg,#cdcdcd 0 4px,transparent 4px 6px)"></div>
<div style="left:787px;top:301px;width:10px;height:13px;background:linear-gradient(#f8f8f8,#dcdcdc);border:1px solid #9a9a9a"></div>
<div style="left:790px;top:306px;width:0;height:0;border-left:2px solid transparent;border-right:2px solid transparent;border-top:3px solid #000"></div>
<div style="left:595px;top:315px;width:52px;overflow:hidden;font-size:6.8px;line-height:11px;color:#1a1a1a">Task Name</div>
<div style="left:586px;top:327px;width:212px;height:1px;background:repeating-linear-gradient(90deg,#cdcdcd 0 4px,transparent 4px 6px)"></div>
<div style="left:595px;top:329px;width:52px;overflow:hidden;font-size:6.8px;line-height:11px;color:#1a1a1a">Date Created</div>
<div style="left:586px;top:341px;width:212px;height:1px;background:repeating-linear-gradient(90deg,#cdcdcd 0 4px,transparent 4px 6px)"></div>
<div style="left:787px;top:328px;width:10px;height:13px;background:linear-gradient(#f8f8f8,#dcdcdc);border:1px solid #9a9a9a"></div>
<div style="left:790px;top:333px;width:0;height:0;border-left:2px solid transparent;border-right:2px solid transparent;border-top:3px solid #000"></div>
<div style="left:595px;top:342px;width:52px;overflow:hidden;font-size:6.8px;line-height:11px;color:#1a1a1a">Date Last Modified</div>
<div style="left:586px;top:354px;width:212px;height:1px;background:repeating-linear-gradient(90deg,#cdcdcd 0 4px,transparent 4px 6px)"></div>
<div style="left:787px;top:341px;width:10px;height:13px;background:linear-gradient(#f8f8f8,#dcdcdc);border:1px solid #9a9a9a"></div>
<div style="left:790px;top:346px;width:0;height:0;border-left:2px solid transparent;border-right:2px solid transparent;border-top:3px solid #000"></div>
<div style="left:595px;top:355px;width:52px;overflow:hidden;font-size:6.8px;line-height:11px;color:#1a1a1a">Date Opened</div>
<div style="left:586px;top:367px;width:212px;height:1px;background:repeating-linear-gradient(90deg,#cdcdcd 0 4px,transparent 4px 6px)"></div>
<div style="left:787px;top:354px;width:10px;height:13px;background:linear-gradient(#f8f8f8,#dcdcdc);border:1px solid #9a9a9a"></div>
<div style="left:790px;top:359px;width:0;height:0;border-left:2px solid transparent;border-right:2px solid transparent;border-top:3px solid #000"></div>
<div style="left:595px;top:368px;width:52px;overflow:hidden;font-size:6.8px;line-height:11px;color:#1a1a1a">Date Completed</div>
<div style="left:787px;top:367px;width:10px;height:13px;background:linear-gradient(#f8f8f8,#dcdcdc);border:1px solid #9a9a9a"></div>
<div style="left:790px;top:372px;width:0;height:0;border-left:2px solid transparent;border-right:2px solid transparent;border-top:3px solid #000"></div>
<div style="left:584px;top:381px;width:214px;height:3px;background:#fff"></div>
<div style="left:583px;top:386px;width:216px;height:222px;border:1px solid #505050;background:#fff"></div>
<div style="left:584px;top:387px;width:214px;height:13px;background:linear-gradient(#fff,#f8f8fa);border-bottom:1px solid #e4e6ec"></div>
<div class="ptitle" style="left:587px;top:389px;line-height:10px">Note</div>
<svg style="position:absolute;left:766px;top:388px" width="32" height="12" viewBox="0 0 32 12"><rect x="1.5" y="1.5" width="8.5" height="8.5" rx="1.5" fill="#aab4c2" stroke="#909aa8" stroke-width=".8"/><rect x="3.3" y="3.3" width="5" height="5" fill="none" stroke="#eef0f4" stroke-width="1"/><rect x="5" y="5" width="1.6" height="1.6" fill="#556"/><path d="M13.5 3.5h5.5M16.2 3.5v2.5M13 6.5h6.5M16.2 6.5v3.5" stroke="#7a7a7a" stroke-width=".9" fill="none"/><rect x="21.5" y="1.5" width="8.5" height="8.5" rx="1.5" fill="#b8645a" stroke="#98483e" stroke-width=".8"/><path d="M23.8 3.8l4 4M27.8 3.8l-4 4" stroke="#f8e8e8" stroke-width="1.3"/></svg>
<div style="left:584px;top:399px;width:214px;height:21px;background:linear-gradient(#f8f9fd,#eef0f8 25%,#d9dff1 45%,#d6dcf0 85%,#dde2f2);border-bottom:1px solid #a8acb8"></div>
<div style="left:588px;top:403px;width:1px;height:13px;background:repeating-linear-gradient(#8890a0 0 1px,transparent 1px 2.5px)"></div>
<svg style="position:absolute;left:584px;top:399px" width="214" height="20" viewBox="0 0 214 20"><path d="M9 10l5-5q1.5-1 2.5 0l1 1q1 1 0 2.5l-5 5h-2.5z" fill="#e8e8e8" stroke="#a0a0a0" stroke-width=".8"/><path d="M12.5 6.5l3 3" stroke="#b8b8b8" stroke-width=".8"/><path d="M28.5 5.5h5l2 2v8h-7z" fill="#f4f6fa" stroke="#9aa6b8" stroke-width=".8"/><circle cx="32" cy="10" r="2" fill="#a8c8e8"/><rect x="32" y="12" width="3" height="3" fill="#e8a860"/><rect x="45" y="6" width="5" height="2.5" fill="#fff" stroke="#9aa" stroke-width=".8"/><rect x="42.5" y="8.5" width="9" height="4" rx="1" fill="#d8dce4" stroke="#8890a0" stroke-width=".8"/><rect x="45" y="12" width="5" height="3" fill="#fff" stroke="#9aa" stroke-width=".8"/><rect x="60.5" y="6.5" width="9" height="9" rx="1.5" fill="#d4e6fa" stroke="#78a4dc" stroke-width=".9"/><rect x="75.5" y="6.5" width="9" height="9" rx="1.5" fill="#d4e6fa" stroke="#78a4dc" stroke-width=".9"/><rect x="90.5" y="6.5" width="9" height="9" rx="1.5" fill="#d4e6fa" stroke="#78a4dc" stroke-width=".9"/><text x="62.3" y="14" font-family="Liberation Sans" font-size="7.5" font-weight="bold" fill="#3a70c8">B</text><text x="78.3" y="14" font-family="Liberation Sans" font-size="7.5" font-style="italic" fill="#3a70c8">I</text><text x="92.3" y="13" font-family="Liberation Sans" font-size="7" fill="#3a70c8">U</text><path d="M92.5 14h5" stroke="#3a70c8" stroke-width=".7"/><rect x="106" y="4.5" width="57" height="13" fill="#fff"/><path d="M107 8h7M110.5 8v7M108 15h5M108 11h5" stroke="#222" stroke-width="1"/><rect x="151.5" y="5.5" width="11" height="12" fill="#e8e8e8" stroke="#8a8a8a" stroke-width="1"/><path d="M154.5 10.5h5l-2.5 3z" fill="#000"/><path d="M208 6l2 1.5-2 1.5M210.5 6l2 1.5-2 1.5" stroke="#000" stroke-width=".9" fill="none"/><path d="M208.5 14.5h4l-2 2z" fill="#000"/></svg>
<div style="left:606px;top:403px;width:1px;height:13px;background:#a4acc0;box-shadow:1px 0 0 #f4f6fb"></div>
<div style="left:640px;top:403px;width:1px;height:13px;background:#a4acc0;box-shadow:1px 0 0 #f4f6fb"></div>
<div style="left:687px;top:403px;width:1px;height:13px;background:#a4acc0;box-shadow:1px 0 0 #f4f6fb"></div>
<div style="left:700px;top:405.5px;font-size:7.6px;line-height:10px;color:#222">Tahoma</div>
<div style="left:586px;top:422.7px;font-family:'Liberation Serif',serif;font-size:9.3px;line-height:11.85px;color:#111">when the project progress reaches the <i style="letter-spacing:.9px">project</i><br><i style="letter-spacing:.28px">transition phase</i> at last, lots of different problems can<br>arise. Usually, the process of project supporting,<br><span style="position:static;letter-spacing:-.08px">implementing or servicing may disclose plenty of issues</span><br>related to production defections, some miscalculations<br>in design, and unforeseen conditions. It is necessary for<br>the project service/support/implementation team to have<br>effective, well-documented process for collecting,<br>describing and handling these issues.</div>
</body></html>
